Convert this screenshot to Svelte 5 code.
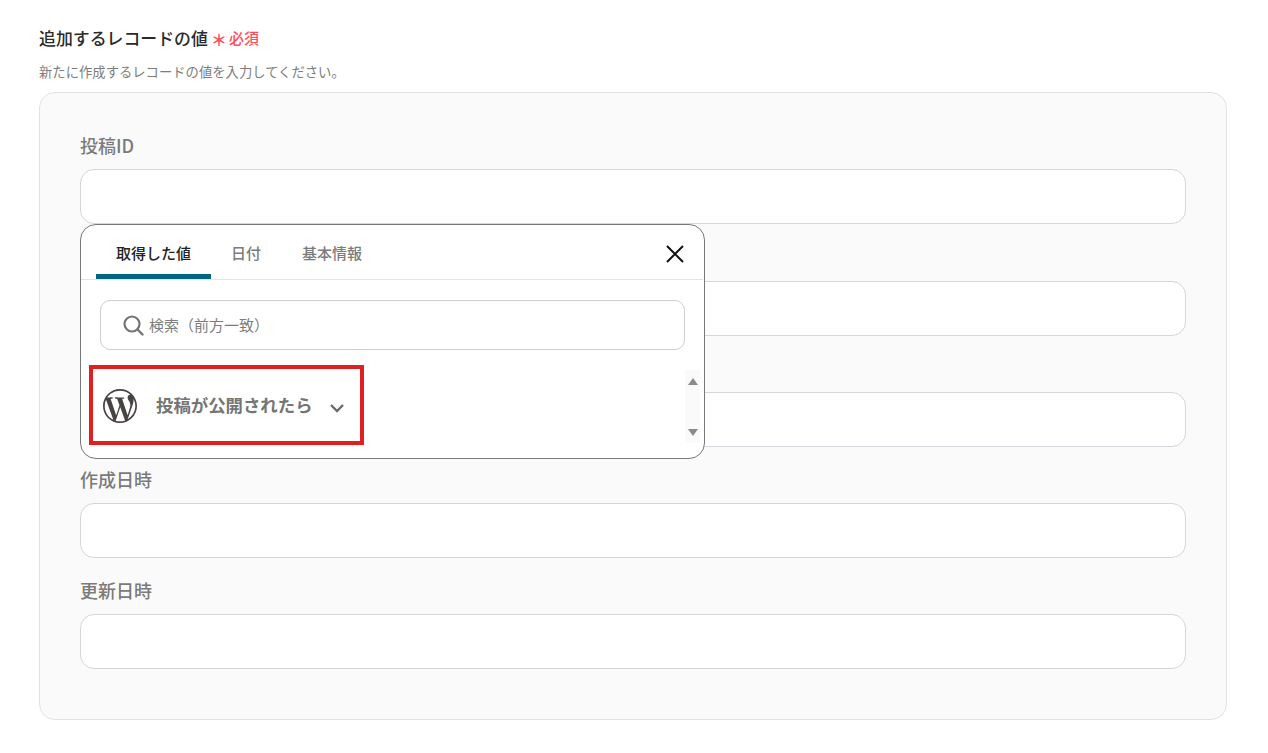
<script>
  // labels of rows 2 and 3 sit behind the popup in the screenshot
  const fields = ["投稿ID", "", "", "作成日時", "更新日時"];
  const tabs = ["取得した値", "日付", "基本情報"];
</script>

<div class="page">
  <div class="heading">
    <span class="title">追加するレコードの値</span>
    <span class="star">＊</span>
    <span class="required">必須</span>
  </div>
  <p class="hint">新たに作成するレコードの値を入力してください。</p>

  <div class="card">
    {#each fields as name, i}
      <div class="field">
        <div class="label">{name}</div>
        <div class="input-wrap">
          <div class="input"></div>
          {#if i === 0}
            <div class="popup">
              <div class="tabs">
                {#each tabs as tab, t}
                  <div class="tab" class:active={t === 0}>{tab}</div>
                {/each}
                <svg class="close" width="20" height="20" viewBox="0 0 20 20">
                  <path d="M2 2 L18 18 M18 2 L2 18" stroke="#111" stroke-width="2" fill="none" />
                </svg>
              </div>
              <div class="search">
                <svg width="22" height="22" viewBox="0 0 22 22">
                  <circle cx="10" cy="10" r="7.5" stroke="#757575" stroke-width="2.2" fill="none" />
                  <path d="M15.5 15.5 L20.5 20.5" stroke="#757575" stroke-width="2.4" stroke-linecap="round" />
                </svg>
                <span>検索（前方一致）</span>
              </div>
              <div class="list">
                <div class="row">
                  <svg class="wp" width="34" height="34" viewBox="0 0 24 24">
                    <path fill="#464342" d="M21.469 6.825c.84 1.537 1.318 3.3 1.318 5.175 0 3.979-2.156 7.456-5.363 9.325l3.295-9.527c.615-1.54.82-2.771.82-3.864 0-.405-.026-.78-.07-1.11m-7.981.105c.647-.03 1.232-.105 1.232-.105.582-.075.514-.93-.067-.899 0 0-1.755.135-2.88.135-1.064 0-2.85-.15-2.85-.15-.585-.03-.661.855-.075.885 0 0 .54.061 1.125.09l1.68 4.605-2.37 7.08L5.354 6.9c.649-.03 1.234-.1 1.234-.1.585-.075.516-.93-.065-.896 0 0-1.746.138-2.874.138-.2 0-.438-.008-.69-.015C4.911 3.15 8.235 1.215 12 1.215c2.809 0 5.365 1.072 7.286 2.833-.046-.003-.091-.009-.141-.009-1.06 0-1.812.923-1.812 1.914 0 .89.513 1.643 1.06 2.531.411.72.89 1.643.89 2.977 0 .915-.354 1.994-.821 3.479l-1.075 3.585-3.9-11.61.001.014zM12 22.784c-1.059 0-2.081-.153-3.048-.437l3.237-9.406 3.315 9.087c.024.053.05.101.078.149-1.12.393-2.325.609-3.582.609M1.211 12c0-1.564.336-3.05.935-4.39L7.29 21.709C3.694 19.96 1.212 16.271 1.211 12M12 0C5.385 0 0 5.385 0 12s5.385 12 12 12 12-5.385 12-12S18.615 0 12 0" />
                  </svg>
                  <span class="row-name">投稿が公開されたら</span>
                  <svg class="chev" width="16" height="10" viewBox="0 0 16 10">
                    <path d="M2 2 L8 8 L14 2" stroke="#6b6b6b" stroke-width="2.4" fill="none" />
                  </svg>
                </div>
                <div class="scrollbar">
                  <span class="up"></span>
                  <span class="down"></span>
                </div>
              </div>
              <div class="mark"></div>
            </div>
          {/if}
        </div>
      </div>
    {/each}
  </div>
</div>

<style>
  :global(body) {
    background: #fff;
    font-family: "Noto Sans CJK JP", "Noto Sans", sans-serif;
  }

  .page {
    padding: 25px 41px 0 39px;
  }

  .heading {
    display: flex;
    align-items: center;
    height: 24px;
  }

  .title {
    font-size: 16.9px;
    font-weight: 500;
    color: #2b2b2b;
  }

  .star {
    margin-left: 3px;
    font-size: 16px;
    font-weight: 700;
    line-height: 24px;
    color: #ff4d5e;
    position: relative;
    top: 2px;
  }

  .required {
    margin-left: 2px;
    font-size: 15px;
    font-weight: 500;
    color: #ff4d5e;
  }

  .hint {
    margin: 13px 0 11px;
    font-size: 13.33px;
    line-height: 19px;
    color: #7d7d7d;
  }

  .card {
    box-sizing: border-box;
    height: 628px;
    padding: 40px 40px 0 40px;
    background: #fafafa;
    border: 1px solid #e2e2e2;
    border-radius: 16px;
  }

  .field {
    margin-bottom: 20px;
  }

  .field:first-child {
    margin-bottom: 21px;
  }

  .label {
    height: 36px;
    font-size: 18px;
    line-height: 24px;
    font-weight: 500;
    color: #7b7b7b;
  }

  .input-wrap {
    position: relative;
  }

  .input {
    box-sizing: border-box;
    height: 55px;
    background: #fff;
    border: 1px solid #d3d6db;
    border-radius: 14px;
  }

  .popup {
    position: absolute;
    z-index: 2;
    top: 55px;
    left: 0;
    box-sizing: border-box;
    width: 625px;
    height: 235px;
    background: #fff;
    border: 1px solid #777;
    border-radius: 16px;
  }

  .tabs {
    position: relative;
    display: flex;
    height: 54px;
    margin-right: 1px;
    padding-left: 15px;
    border-bottom: 1px solid #e4e4e4;
  }

  .tab {
    padding: 0 20px;
    font-size: 15px;
    line-height: 56px;
    font-weight: 500;
    color: #7b7b7b;
  }

  .tab:last-of-type {
    margin-left: 1px;
  }

  .tab.active {
    color: #222;
    border-bottom: 5px solid #00677f;
    border-radius: 5px 5px 0 0;
    height: 49px;
    line-height: 56px;
  }

  .close {
    position: absolute;
    right: 18px;
    top: 19px;
  }

  .search {
    display: flex;
    align-items: center;
    box-sizing: border-box;
    width: 585px;
    height: 50px;
    margin: 20px 0 0 19px;
    padding-left: 21px;
    border: 1px solid #cfcfcf;
    border-radius: 10px;
    font-size: 15px;
    color: #7d7d7d;
  }

  .search span {
    margin: 0 0 2px 5px;
  }

  .list {
    position: relative;
    height: 80px;
    margin-top: 20px;
  }

  .row {
    display: flex;
    align-items: center;
    height: 72px;
    padding-left: 22px;
  }

  .row-name {
    margin: 0 0 4px 19px;
    font-size: 17.4px;
    font-weight: 700;
    color: #757575;
  }

  .chev {
    margin-left: 16px;
    margin-top: 3px;
  }

  .scrollbar {
    position: absolute;
    top: 0;
    right: 4px;
    width: 15px;
    height: 73px;
    background: #fafafa;
  }

  .up, .down {
    position: absolute;
    left: 3px;
    border-left: 5.5px solid transparent;
    border-right: 5.5px solid transparent;
  }

  .up {
    top: 8px;
    border-bottom: 7px solid #8a8a8a;
  }

  .down {
    bottom: 7px;
    border-top: 7px solid #8a8a8a;
  }

  .mark {
    position: absolute;
    left: 8px;
    top: 140px;
    box-sizing: border-box;
    width: 275px;
    height: 80px;
    border: 4px solid #e02020;
  }
</style>
